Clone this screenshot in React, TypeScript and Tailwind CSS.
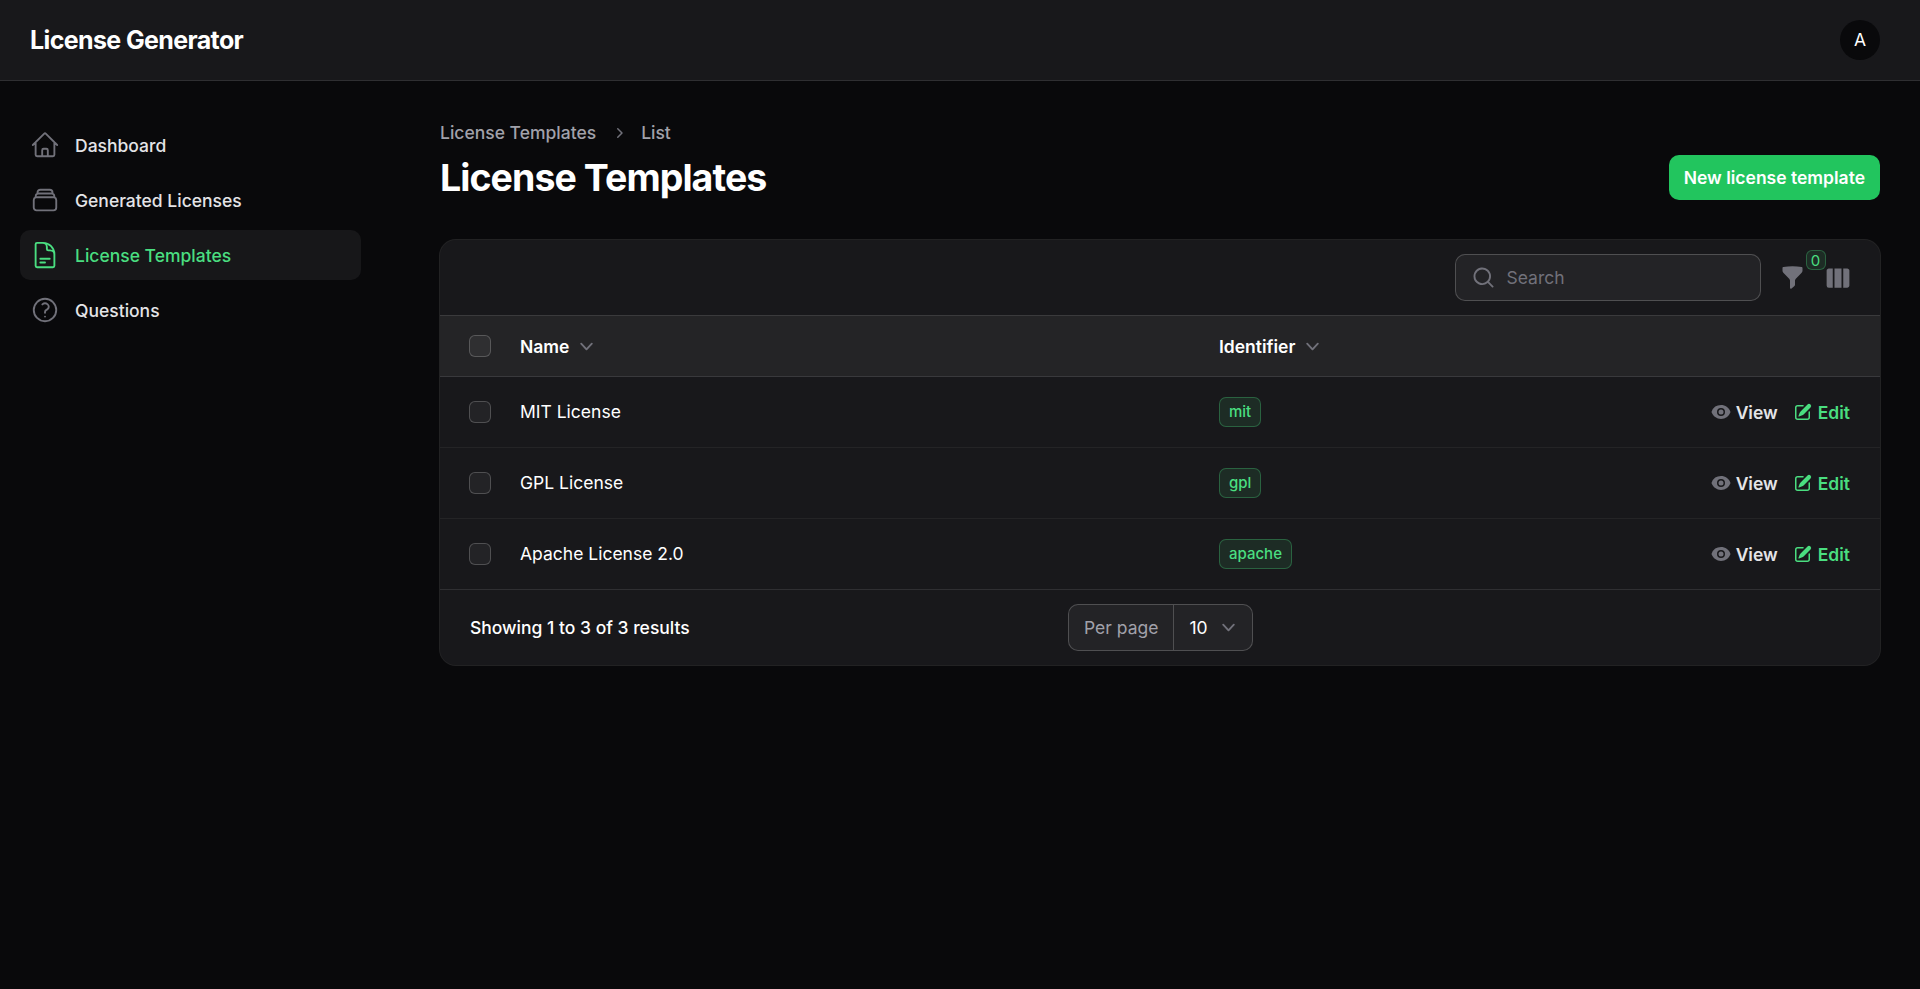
import type { ReactNode } from "react";

const NAV_ITEMS = [
  {
    label: "Dashboard",
    path: "m2.25 12 8.954-8.955c.44-.439 1.152-.439 1.591 0L21.75 12M4.5 9.75v10.125c0 .621.504 1.125 1.125 1.125H9.75v-4.875c0-.621.504-1.125 1.125-1.125h2.25c.621 0 1.125.504 1.125 1.125V21h4.125c.621 0 1.125-.504 1.125-1.125V9.75M8.25 21h8.25",
  },
  {
    label: "Generated Licenses",
    path: "M6 6.878V6a2.25 2.25 0 0 1 2.25-2.25h7.5A2.25 2.25 0 0 1 18 6v.878m-12 0c.235-.083.487-.128.75-.128h10.5c.263 0 .515.045.75.128m-12 0A2.25 2.25 0 0 0 4.5 9v.878m13.5-3A2.25 2.25 0 0 1 19.5 9v.878m0 0a2.246 2.246 0 0 0-.75-.128H5.25c-.263 0-.515.045-.75.128m15 0A2.25 2.25 0 0 1 21 12v6a2.25 2.25 0 0 1-2.25 2.25H5.25A2.25 2.25 0 0 1 3 18v-6c0-.98.626-1.813 1.5-2.122",
  },
  {
    label: "License Templates",
    active: true,
    path: "M19.5 14.25v-2.625a3.375 3.375 0 0 0-3.375-3.375h-1.5A1.125 1.125 0 0 1 13.5 7.125v-1.5a3.375 3.375 0 0 0-3.375-3.375H8.25m0 12.75h7.5m-7.5 3H12M10.5 2.25H5.625c-.621 0-1.125.504-1.125 1.125v17.25c0 .621.504 1.125 1.125 1.125h12.75c.621 0 1.125-.504 1.125-1.125V11.25a9 9 0 0 0-9-9Z",
  },
  {
    label: "Questions",
    path: "M9.879 7.519c1.171-1.025 3.071-1.025 4.242 0 1.172 1.025 1.172 2.687 0 3.712-.203.179-.43.326-.67.442-.745.361-1.45.999-1.45 1.827v.75M21 12a9 9 0 1 1-18 0 9 9 0 0 1 18 0Zm-9 5.25h.008v.008H12v-.008Z",
  },
];

const ROWS = [
  { name: "MIT License", id: "mit" },
  { name: "GPL License", id: "gpl" },
  { name: "Apache License 2.0", id: "apache" },
];

function Mini({ d, className }: { d: string; className: string }) {
  return (
    <svg viewBox="0 0 20 20" fill="currentColor" className={className}>
      <path fillRule="evenodd" clipRule="evenodd" d={d} />
    </svg>
  );
}

const CHEVRON_DOWN =
  "M5.23 7.21a.75.75 0 0 1 1.06.02L10 11.168l3.71-3.938a.75.75 0 1 1 1.08 1.04l-4.25 4.5a.75.75 0 0 1-1.08 0l-4.25-4.5a.75.75 0 0 1 .02-1.06Z";
const CHEVRON_RIGHT =
  "M8.22 5.22a.75.75 0 0 1 1.06 0l4.25 4.25a.75.75 0 0 1 0 1.06l-4.25 4.25a.75.75 0 0 1-1.06-1.06L11.94 10 8.22 6.28a.75.75 0 0 1 0-1.06Z";

function Checkbox() {
  return <div className="h-[22px] w-[22px] shrink-0 rounded-md border border-white/20 bg-white/5" />;
}

function HeaderCell({ children, className }: { children: ReactNode; className: string }) {
  return (
    <div className={`flex items-center gap-[5px] font-semibold text-white ${className}`}>
      <span className="pt-[2px]">{children}</span>
      <Mini d={CHEVRON_DOWN} className="h-[25px] w-[25px] text-[#71717a]" />
    </div>
  );
}

function Row({ name, id }: { name: string; id: string }) {
  return (
    <div className="flex h-[71px] items-center border-t border-white/5 pl-[29px] pr-[30px]">
      <Checkbox />
      <div className="ml-[29px] w-[699px] font-normal text-white">{name}</div>
      <div className="flex-1">
        <span className="inline-flex h-[30px] items-center rounded-[7px] border border-[#4ade80]/30 bg-[#4ade80]/10 px-[9px] text-[15px] font-medium text-[#4ade80]">
          {id}
        </span>
      </div>
      <div className="flex items-center gap-[5px] font-semibold text-[#e4e4e7]">
        <svg viewBox="0 0 20 20" fill="currentColor" className="h-5 w-5 text-[#71717a]">
          <path d="M10 12.5a2.5 2.5 0 1 0 0-5 2.5 2.5 0 0 0 0 5Z" />
          <path
            fillRule="evenodd"
            clipRule="evenodd"
            d="M.664 10.59a1.651 1.651 0 0 1 0-1.186A10.004 10.004 0 0 1 10 3c4.257 0 7.893 2.66 9.336 6.41.147.381.146.804 0 1.186A10.004 10.004 0 0 1 10 17c-4.257 0-7.893-2.66-9.336-6.41ZM14 10a4 4 0 1 1-8 0 4 4 0 0 1 8 0Z"
          />
        </svg>
        <span className="pt-[2px]">View</span>
      </div>
      <div className="ml-[15px] flex items-center gap-[5px] font-semibold text-[#4ade80]">
        <svg viewBox="0 0 20 20" fill="currentColor" className="h-5 w-5">
          <path d="m5.433 13.917 1.262-3.155A4 4 0 0 1 7.58 9.42l6.92-6.918a2.121 2.121 0 0 1 3 3l-6.92 6.918c-.383.383-.84.685-1.343.886l-3.154 1.262a.5.5 0 0 1-.65-.65Z" />
          <path d="M3.5 5.75c0-.69.56-1.25 1.25-1.25H10A.75.75 0 0 0 10 3H4.75A2.75 2.75 0 0 0 2 5.75v9.5A2.75 2.75 0 0 0 4.75 18h9.5A2.75 2.75 0 0 0 17 15.25V10a.75.75 0 0 0-1.5 0v5.25c0 .69-.56 1.25-1.25 1.25h-9.5c-.69 0-1.25-.56-1.25-1.25v-9.5Z" />
        </svg>
        <span className="pt-[2px]">Edit</span>
      </div>
    </div>
  );
}

export default function App() {
  return (
    <div className="min-h-[989px] bg-[#09090b] font-['Inter',sans-serif] text-[17.5px] font-medium text-white">
      <header className="flex h-[81px] items-center justify-between border-b border-white/10 bg-[#18181b] pl-[30px] pr-10">
        <div className="text-[25px] font-bold leading-none tracking-tight text-white">License Generator</div>
        <div className="flex h-10 w-10 items-center justify-center rounded-full bg-[#09090b] font-normal text-white">
          A
        </div>
      </header>

      <div className="flex">
        <aside className="flex w-[381px] shrink-0 flex-col gap-[5px] px-5 pt-[39px]">
          {NAV_ITEMS.map((item) => (
            <div
              key={item.label}
              className={`flex h-[50px] items-center gap-[15px] rounded-[10px] px-[10px] ${item.active ? "bg-[#171719] text-[#4ade80]" : "text-[#e4e4e7]"}`}
            >
              <svg
                viewBox="0 0 24 24"
                fill="none"
                stroke="currentColor"
                strokeWidth={1.5}
                strokeLinecap="round"
                strokeLinejoin="round"
                className={`h-[30px] w-[30px] shrink-0 ${item.active ? "text-[#4ade80]" : "text-[#71717a]"}`}
              >
                <path d={item.path} />
              </svg>
              <span className="pt-[2px]">{item.label}</span>
            </div>
          ))}
        </aside>

        <main className="flex-1 pr-10 pl-[59px] pt-10">
          <div className="flex items-end justify-between">
            <div>
              <div className="flex h-[24px] items-center gap-[12.5px] text-[#a1a1aa]">
                License Templates
                <Mini d={CHEVRON_RIGHT} className="h-5 w-5 text-[#71717a]" />
                List
              </div>
              <h1 className="mt-[11px] text-[37.5px] font-bold leading-[44px] tracking-tight text-white">License Templates</h1>
            </div>
            <button className="flex h-[45px] items-center rounded-[10px] bg-[#22c55e] px-[15px] pt-[2px] font-semibold text-white">
              New license template
            </button>
          </div>

          <section className="mt-10 overflow-hidden rounded-2xl bg-[#18181b] ring-1 ring-white/10">
            <div className="flex h-[75px] items-center justify-end pr-[28px]">
              <div className="flex h-[47px] w-[306px] items-center gap-[11px] rounded-[10px] border border-white/20 bg-white/5 px-[15px]">
                <svg viewBox="0 0 20 20" fill="currentColor" className="h-[25px] w-[25px] shrink-0 text-[#71717a]">
                  <path
                    fillRule="evenodd"
                    clipRule="evenodd"
                    d="M9 3.5a5.5 5.5 0 1 0 0 11 5.5 5.5 0 0 0 0-11ZM2 9a7 7 0 1 1 12.452 4.391l3.328 3.329a.75.75 0 1 1-1.06 1.06l-3.329-3.328A7 7 0 0 1 2 9Z"
                  />
                </svg>
                <span className="pt-[2px] font-normal text-[#71717a]">Search</span>
              </div>
              <div className="relative ml-[19.5px] mr-[19px]">
                <svg viewBox="0 0 20 20" fill="currentColor" className="h-[25px] w-[25px] text-[#71717a]">
                  <path d="M2.628 1.601C5.028 1.206 7.49 1 10 1s4.973.206 7.372.601a.75.75 0 0 1 .628.74v2.288a2.25 2.25 0 0 1-.659 1.59l-4.682 4.683a2.25 2.25 0 0 0-.659 1.59v3.037c0 .684-.31 1.33-.844 1.757l-1.937 1.55A.75.75 0 0 1 8 18.25v-5.757a2.25 2.25 0 0 0-.659-1.591L2.659 6.22A2.25 2.25 0 0 1 2 4.629V2.34a.75.75 0 0 1 .628-.74Z" />
                </svg>
                <span className="absolute -top-[15px] -right-[20.5px] flex h-5 w-5 items-center justify-center rounded-md border border-[#4ade80]/30 bg-[#4ade80]/10 text-[15px] font-normal leading-none text-[#4ade80]">
                  0
                </span>
              </div>
              <svg viewBox="0 0 24 24" fill="currentColor" className="h-7 w-7 text-[#71717a]">
                <path d="M15 3.75H9v16.5h6V3.75ZM16.5 20.25h3.375c1.035 0 1.875-.84 1.875-1.875V5.625c0-1.036-.84-1.875-1.875-1.875H16.5v16.5ZM4.125 3.75H7.5v16.5H4.125a1.875 1.875 0 0 1-1.875-1.875V5.625c0-1.036.84-1.875 1.875-1.875Z" />
              </svg>
            </div>

            <div className="flex h-[61px] items-center border-t border-white/10 bg-white/5 pl-[29px]">
              <Checkbox />
              <HeaderCell className="ml-[29px] w-[699px]">Name</HeaderCell>
              <HeaderCell className="flex-1">Identifier</HeaderCell>
            </div>

            <div className="border-t border-white/10">
              {ROWS.map((row, index) => (
                <div key={row.id} className={index === 0 ? "-mt-px" : ""}>
                  <Row name={row.name} id={row.id} />
                </div>
              ))}
            </div>

            <div className="flex h-[76px] items-center border-t border-white/10 pl-[30px]">
              <div className="w-[598px] pt-[2px]">Showing 1 to 3 of 3 results</div>
              <div className="flex h-[47px] items-center rounded-[10px] border border-white/20 bg-white/5 font-normal">
                <div className="flex h-full items-center border-r border-white/20 px-[15px] pt-[2px] text-[#a1a1aa]">Per page</div>
                <div className="flex w-[78px] items-center justify-between pl-[15px] pr-[11px] text-white">
                  <span className="pt-[2px]">10</span>
                  <Mini d={CHEVRON_DOWN} className="h-[25px] w-[25px] text-[#71717a]" />
                </div>
              </div>
            </div>
          </section>
        </main>
      </div>
    </div>
  );
}
